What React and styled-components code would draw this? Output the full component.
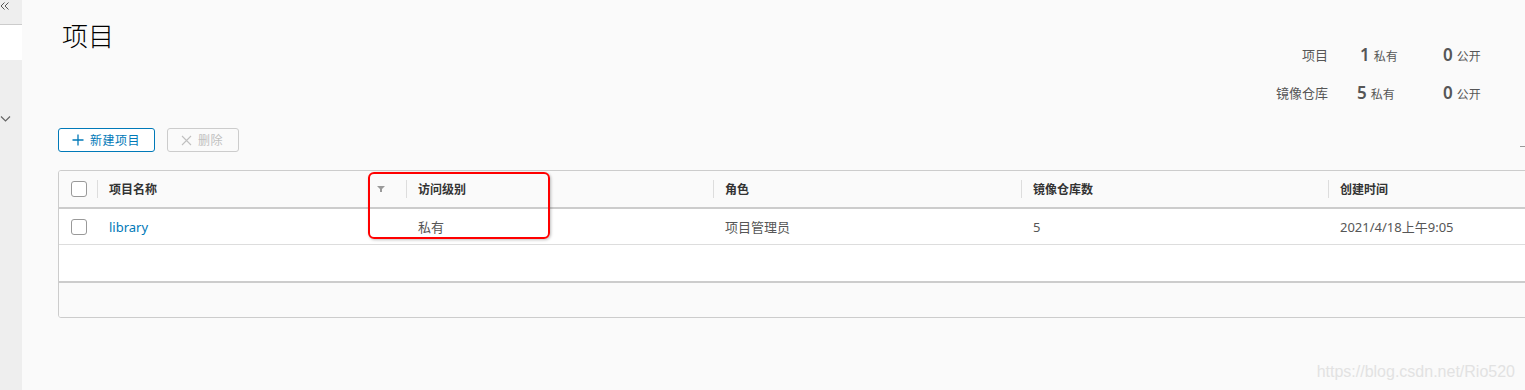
import styled, { createGlobalStyle } from "styled-components";

const GlobalStyle = createGlobalStyle`
    html, body {
        margin: 0;
        padding: 0;
        width: 1525px;
        height: 390px;
        overflow: hidden;
        background: #fafafa;
    }
    body {
        font-family: "Noto Sans", "Noto Sans CJK SC", sans-serif;
        color: #565656;
    }
`

const cjk = `"Noto Sans", "Noto Sans CJK SC", sans-serif`

const Page = styled.div`
    position: relative;
    display: flex;
    width: 1525px;
    height: 390px;
    overflow: hidden;
`
const Sidebar = styled.div`
    width: 22px;
    flex-shrink: 0;
    background: #eeeeee;
    display: flex;
    flex-direction: column;
`
const SideTop = styled.div`
    height: 25px;
    border-bottom: 1px solid #cccccc;
    display: flex;
    align-items: flex-start;
    padding-top: 1px;
    box-sizing: border-box;
`
const SideBlank = styled.div`
    height: 35px;
    background: #ffffff;
`
const SideChevron = styled.div`
    margin-top: 46px;
`
const Main = styled.div`
    flex: 1;
    min-width: 0;
    padding: 0 43px 0 36px;
    background: #fafafa;
`
const HeaderRow = styled.div`
    display: flex;
    justify-content: space-between;
    align-items: flex-start;
    height: 110px;
`
const Title = styled.h1`
    margin: 18px 0 0 4px;
    font-family: ${cjk};
    font-size: 26px;
    line-height: 36px;
    font-weight: 300;
    color: #000;
`
const Stats = styled.div`
    margin-top: 44px;
    display: grid;
    grid-template-columns: 60px 112px 42px;
    row-gap: 14px;
`
const StatLabel = styled.div`
    text-align: right;
    font-size: 13px;
    line-height: 22px;
    color: #565656;
`
const StatCell = styled.div`
    padding-left: ${p => p.$pad}px;
    white-space: nowrap;
    line-height: 22px;
    font-size: 12px;
    color: #565656;
    b {
        font-size: 17px;
        font-weight: 600;
        margin-right: 4px;
        color: #565656;
    }
`
const Toolbar = styled.div`
    display: flex;
    align-items: flex-start;
    gap: 12px;
    margin-top: 18px;
    margin-right: -43px;
    height: 42px;
`
const Button = styled.button`
    height: 24px;
    width: ${p => p.$w}px;
    padding: 0 0 0 13px;
    display: flex;
    align-items: center;
    gap: 6px;
    box-sizing: border-box;
    border: 1px solid ${p => (p.disabled ? "#cccccc" : "#0079b8")};
    border-radius: 3px;
    background: ${p => (p.disabled ? "transparent" : "#ffffff")};
    color: ${p => (p.disabled ? "#c0c0c0" : "#0079b8")};
    font-family: ${cjk};
    font-size: 12px;
    letter-spacing: 0.5px;
    cursor: ${p => (p.disabled ? "default" : "pointer")};
`
const Dash = styled.div`
    margin-left: auto;
    margin-top: 18px;
    width: 5px;
    height: 1px;
    background: #999;
`
const TableWrap = styled.div`
    position: relative;
    width: 1577px;
`
const Table = styled.div`
    border: 1px solid #cccccc;
    border-radius: 3px;
    background: #ffffff;
    overflow: hidden;
`
const Row = styled.div`
    display: grid;
    grid-template-columns: 38px 309px 307px 308px 307px 307px;
    height: ${p => p.$h}px;
    align-items: center;
    background: ${p => (p.$head ? "#fafafa" : "#ffffff")};
    border-bottom: ${p => (p.$head ? "2px solid #cccccc" : "1px solid #dddddd")};
`
const HeadCell = styled.div`
    position: relative;
    height: 100%;
    display: flex;
    align-items: center;
    padding-left: ${p => (p.$check ? 12 : 12)}px;
    font-family: ${cjk};
    font-size: 12px;
    font-weight: 700;
    color: #333333;
    &::before {
        content: "";
        display: ${p => (p.$first ? "none" : "block")};
        position: absolute;
        left: 0;
        top: 9px;
        width: 1px;
        height: 18px;
        background: #dddddd;
    }
`
const Cell = styled.div`
    padding-left: 12px;
    display: flex;
    align-items: center;
    font-family: ${cjk};
    font-size: 13px;
    color: ${p => (p.$link ? "#0079b8" : "#565656")};
`
const Check = styled.span`
    width: 16px;
    height: 16px;
    box-sizing: border-box;
    border: 1px solid #999999;
    border-radius: 3px;
    background: #ffffff;
`
const Filter = styled.span`
    position: absolute;
    right: 21px;
    top: 15px;
    line-height: 0;
`
const EmptyBody = styled.div`
    height: 36px;
    background: #ffffff;
`
const Foot = styled.div`
    height: 34px;
    border-top: 2px solid #cccccc;
    background: #fafafa;
`
const Highlight = styled.div`
    position: absolute;
    left: 310px;
    top: 2px;
    width: 182px;
    height: 67px;
    box-sizing: border-box;
    border: 2px solid #ff0000;
    border-radius: 6px;
    box-shadow: 1px 1px 3px rgba(0, 0, 0, 0.25);
    pointer-events: none;
`
const Watermark = styled.div`
    position: absolute;
    right: 10px;
    bottom: 9px;
    font-family: "Liberation Sans", Arial, sans-serif;
    font-size: 16px;
    color: #e2e2e2;
`

const headers = ["项目名称", "访问级别", "角色", "镜像仓库数", "创建时间"]

function App() {
    return (
        <Page>
            <GlobalStyle />
            <Sidebar>
                <SideTop>
                    <svg width="10" height="10" viewBox="0 0 10 10" fill="none" stroke="#555" strokeWidth="1">
                        <path d="M4.5 1.5 L1 5 L4.5 8.5 M8.5 1.5 L5 5 L8.5 8.5" />
                    </svg>
                </SideTop>
                <SideBlank />
                <SideChevron>
                    <svg width="12" height="8" viewBox="0 0 12 8" fill="none" stroke="#666" strokeWidth="1.2">
                        <path d="M1 1.5 L5.5 6 L10 1.5" />
                    </svg>
                </SideChevron>
            </Sidebar>

            <Main>
                <HeaderRow>
                    <Title>项目</Title>
                    <Stats>
                        <StatLabel>项目</StatLabel>
                        <StatCell $pad={32}><b>1</b>私有</StatCell>
                        <StatCell $pad={3}><b>0</b>公开</StatCell>
                        <StatLabel>镜像仓库</StatLabel>
                        <StatCell $pad={29}><b>5</b>私有</StatCell>
                        <StatCell $pad={3}><b>0</b>公开</StatCell>
                    </Stats>
                </HeaderRow>

                <Toolbar>
                    <Button $w={97}>
                        <svg width="12" height="12" viewBox="0 0 12 12" stroke="#0079b8" strokeWidth="1.3">
                            <path d="M6 0.5 V11.5 M0.5 6 H11.5" />
                        </svg>
                        新建项目
                    </Button>
                    <Button $w={72} disabled>
                        <svg width="11" height="11" viewBox="0 0 11 11" stroke="#c0c0c0" strokeWidth="1.1">
                            <path d="M1 1 L10 10 M10 1 L1 10" />
                        </svg>
                        删除
                    </Button>
                    <Dash />
                </Toolbar>

                <TableWrap>
                    <Table>
                        <Row $head $h={36}>
                            <HeadCell $check $first><Check /></HeadCell>
                            {headers.map((h, i) =>
                                <HeadCell key={h}>
                                    {h}
                                    {i === 0 ?
                                        <Filter>
                                            <svg width="8" height="6" viewBox="0 0 8 6" fill="#9a9a9a">
                                                <path d="M0 0 H8 L5 3 V6 H3 V3 Z" />
                                            </svg>
                                        </Filter> : null}
                                </HeadCell>
                            )}
                        </Row>
                        <Row $h={35}>
                            <Cell><Check /></Cell>
                            <Cell $link>library</Cell>
                            <Cell>私有</Cell>
                            <Cell>项目管理员</Cell>
                            <Cell>5</Cell>
                            <Cell>2021/4/18上午9:05</Cell>
                        </Row>
                        <EmptyBody />
                        <Foot />
                    </Table>
                    <Highlight />
                </TableWrap>
            </Main>

            <Watermark>https://blog.csdn.net/Rio520</Watermark>
        </Page>
    )
}

export default App;
